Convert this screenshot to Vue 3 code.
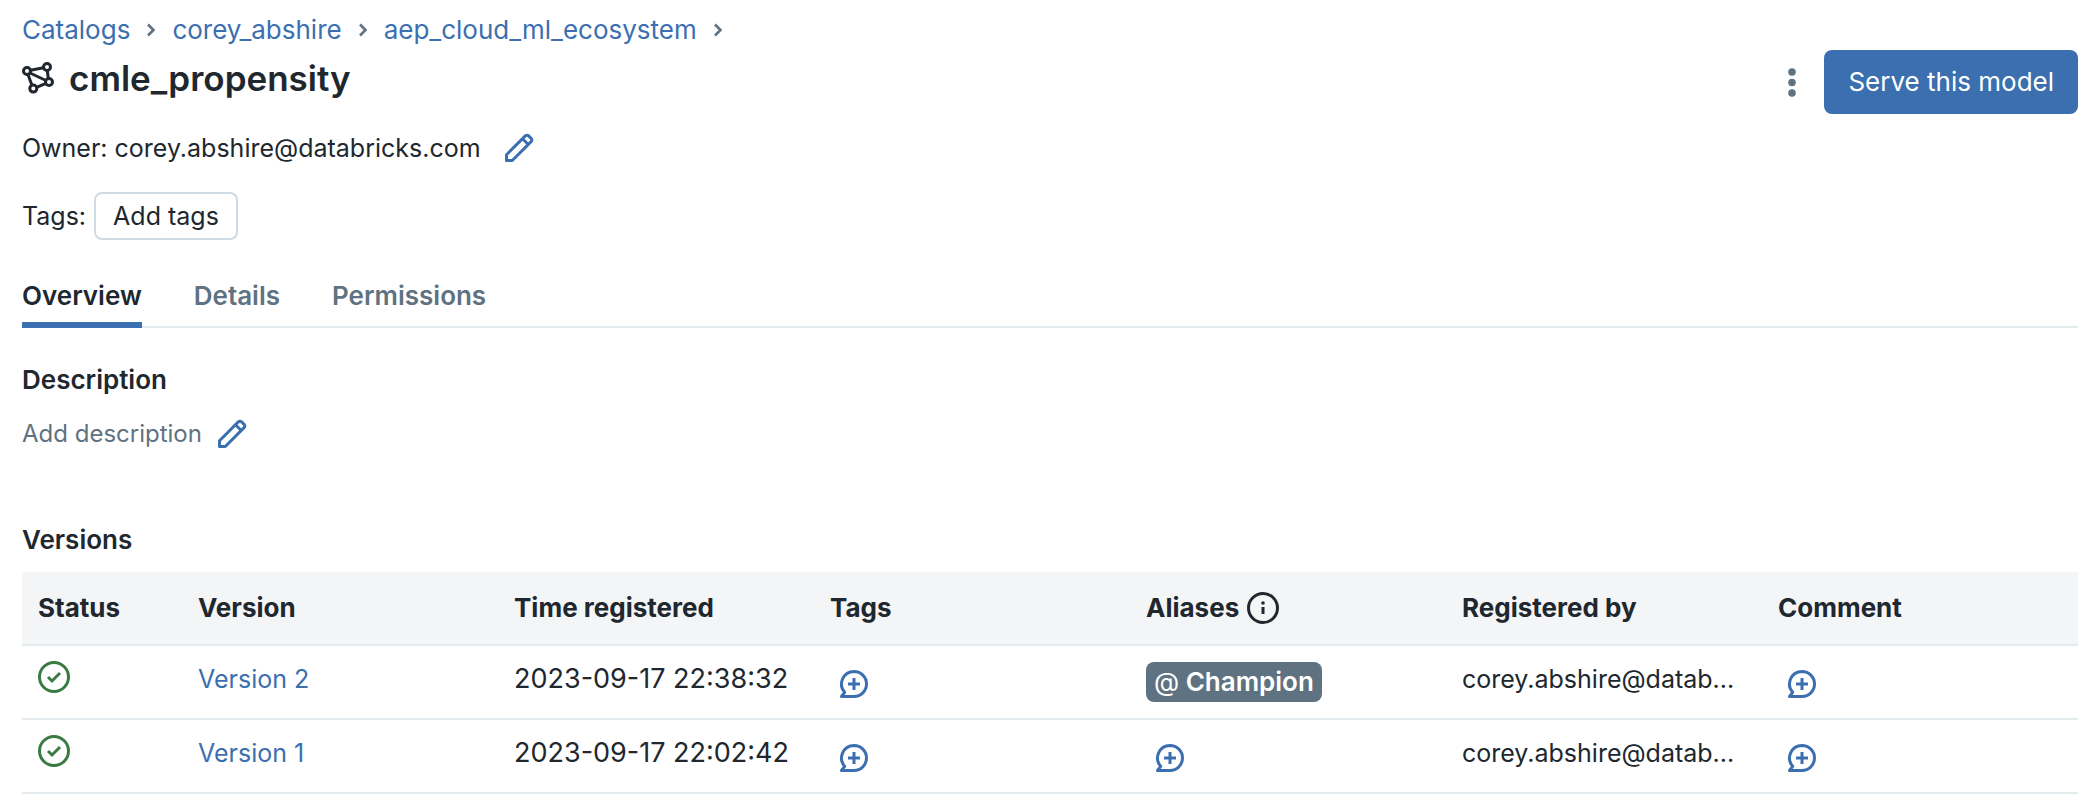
<script setup>
import { h } from 'vue'

const crumbs = ['Catalogs', 'corey_abshire', 'aep_cloud_ml_ecosystem']
const tabs = ['Overview', 'Details', 'Permissions']
const versions = [
  { name: 'Version 2', time: '2023-09-17 22:38:32', alias: 'Champion', owner: 'corey.abshire@datab...' },
  { name: 'Version 1', time: '2023-09-17 22:02:42', alias: '', owner: 'corey.abshire@datab...' }
]

const svg = (children) => h('svg', { class: 'icon', viewBox: '0 0 32 32', width: 32, height: 32, fill: 'none', stroke: 'currentColor', 'stroke-width': 3, 'aria-hidden': 'true' }, children)
const PencilIcon = () => svg([
  h('path', { 'stroke-linejoin': 'round', d: 'M3.500 22.700L22.300 3.900a2.300 2.300 0 0 1 3.300 0l2.500 2.500a2.300 2.300 0 0 1 0 3.300L9.300 28.500H3.500zM19.500 6.700l5.800 5.800' })
])
const CommentPlusIcon = () => svg([
  h('path', { 'stroke-linejoin': 'round', d: 'M16 3.500a12.500 12.500 0 0 1 0 25H3.500l3.200-4.200A12.500 12.500 0 0 1 16 3.500z' }),
  h('path', { d: 'M16 10v12M10 16h12' })
])
const CheckIcon = () => svg([
  h('circle', { cx: 16, cy: 16, r: 14.5 }),
  h('path', { d: 'M10 16l4 4 8-8' })
])
</script>

<template>
  <main class="page">
    <nav class="crumbs" aria-label="Breadcrumb">
      <template v-for="c in crumbs" :key="c">
        <a href="#">{{ c }}</a>
        <svg class="chevron" viewBox="0 0 10 14" width="10" height="14" aria-hidden="true"><path d="M2 1.500L7.500 7 2 12.500" fill="none" stroke="currentColor" stroke-width="2.600" /></svg>
      </template>
    </nav>

    <header class="head">
      <h1>
        <svg viewBox="0 0 32 32" width="32" height="32" fill="none" stroke="currentColor" stroke-width="3" aria-hidden="true">
          <circle cx="5" cy="9" r="3.500" /><circle cx="25" cy="5" r="3.500" /><circle cx="27" cy="20" r="3.500" /><circle cx="11.300" cy="26.600" r="3.500" />
          <path d="M8.500 8.300l13-2.600M6 12.500l4 11M8 11l16 7.500M25.300 8.500l1 8M14.500 25.300l9.500-4" />
        </svg>
        <span>cmle_propensity</span>
      </h1>
      <div class="actions">
        <button class="more" type="button" aria-label="More actions">
          <svg viewBox="0 0 8 29" width="8" height="29" fill="currentColor" aria-hidden="true"><circle cx="4" cy="4" r="3.800" /><circle cx="4" cy="14.500" r="3.800" /><circle cx="4" cy="25" r="3.800" /></svg>
        </button>
        <button class="primary" type="button">Serve this model</button>
      </div>
    </header>

    <div class="meta">
      <span>Owner: corey.abshire@databricks.com</span>
      <button class="icon-btn" type="button" aria-label="Edit owner"><PencilIcon /></button>
    </div>
    <div class="meta tags">
      <span>Tags:</span>
      <button class="outline" type="button">Add tags</button>
    </div>

    <div class="tabs" role="tablist">
      <button v-for="(t, i) in tabs" :key="t" type="button" role="tab" :aria-selected="i === 0" :class="{ active: i === 0 }">{{ t }}</button>
    </div>

    <section class="description">
      <h2>Description</h2>
      <div class="hint">
        <span>Add description</span>
        <button class="icon-btn" type="button" aria-label="Edit description"><PencilIcon /></button>
      </div>
    </section>

    <section>
      <h2>Versions</h2>
      <table>
        <colgroup><col class="narrow" /><col v-for="n in 6" :key="n" /></colgroup>
        <thead>
          <tr>
            <th>Status</th>
            <th>Version</th>
            <th>Time registered</th>
            <th>Tags</th>
            <th>
              <span class="with-icon">Aliases
                <svg viewBox="0 0 32 32" width="32" height="32" aria-hidden="true"><circle cx="16" cy="16" r="14.500" fill="none" stroke="currentColor" stroke-width="3" /><path d="M14.500 15h3v7h-3z" fill="currentColor" /><circle cx="16" cy="11" r="1.800" fill="currentColor" /></svg>
              </span>
            </th>
            <th>Registered by</th>
            <th>Comment</th>
          </tr>
        </thead>
        <tbody>
          <tr v-for="v in versions" :key="v.name">
            <td class="status"><CheckIcon /></td>
            <td class="text"><a href="#">{{ v.name }}</a></td>
            <td class="text time">{{ v.time }}</td>
            <td><button class="add" type="button" aria-label="Add tags"><CommentPlusIcon /></button></td>
            <td>
              <span v-if="v.alias" class="alias"><span class="at">@</span> {{ v.alias }}</span>
              <button v-else class="add" type="button" aria-label="Add alias"><CommentPlusIcon /></button>
            </td>
            <td class="text">{{ v.owner }}</td>
            <td><button class="add" type="button" aria-label="Add comment"><CommentPlusIcon /></button></td>
          </tr>
        </tbody>
      </table>
    </section>
  </main>
</template>

<style>
body {
  background: #fff;
}
</style>

<style scoped>
.page {
  padding: 10px 18px 12px 22px;
  font-family: Inter, Roboto, "Liberation Sans", sans-serif;
  font-size: 26px;
  line-height: 40px;
  color: #20272e;
}
button {
  font: inherit;
  color: inherit;
  background: none;
  border: 0;
  padding: 0;
}
svg {
  display: block;
  flex: none;
}
a {
  color: #3b6fb0;
  text-decoration: none;
}
h1,
h2 {
  margin: 0;
  font-weight: 600;
}
h1 {
  display: flex;
  align-items: center;
  gap: 15px;
  font-size: 35px;
  line-height: 56px;
}
h2 {
  font-size: 26px;
  line-height: 40px;
}
.crumbs {
  display: flex;
  align-items: center;
  gap: 16px;
}
.chevron {
  color: #5f7281;
}
.head {
  display: flex;
  align-items: flex-start;
  justify-content: space-between;
}
.actions {
  display: flex;
  align-items: center;
  height: 64px;
  gap: 28px;
}
.more {
  color: #5f7281;
}
.primary {
  padding: 12px 24px;
  border-radius: 8px;
  background: #3b6fb0;
  color: #fff;
}
.meta {
  display: flex;
  align-items: center;
  gap: 22px;
  margin-top: 14px;
  font-size: 25px;
}
.tags {
  gap: 8px;
  margin-top: 24px;
}
.outline {
  padding: 2px 17px;
  border: 2px solid #d0dae5;
  border-radius: 8px;
}
.icon-btn,
.add {
  color: #3b6fb0;
}
.tabs {
  display: flex;
  gap: 52px;
  margin-top: 36px;
  box-shadow: inset 0 -2px #e4ebee;
  font-weight: 600;
  color: #5f7281;
}
.tabs button {
  padding: 0 0 6px;
  border-bottom: 6px solid transparent;
  font-weight: 600;
}
.tabs .active {
  border-color: #3b6fb0;
  color: #20272e;
}
.description {
  margin: 32px 0 66px;
}
.hint {
  display: flex;
  align-items: center;
  gap: 14px;
  margin-top: 14px;
  font-size: 24px;
  color: #5f7281;
}
table {
  width: 100%;
  margin-top: 12px;
  border-collapse: separate;
  border-spacing: 0;
  table-layout: fixed;
}
.narrow {
  width: 160px;
}
th,
td {
  box-sizing: border-box;
  height: 74px;
  padding: 0 16px;
  border-bottom: 2px solid #e4ebee;
  text-align: left;
  white-space: nowrap;
}
th {
  background: #f3f5f7;
  font-weight: 700;
}
.with-icon {
  display: flex;
  align-items: center;
  gap: 8px;
}
.status {
  padding-top: 15px;
  vertical-align: top;
  color: #3a7a43;
}
.text {
  padding-top: 13px;
  vertical-align: top;
  font-size: 25px;
}
.time {
  font-size: 27px;
}
.add {
  display: block;
  padding: 4px 8px 0;
}
.alias {
  display: inline-block;
  padding: 0 8px;
  border-radius: 8px;
  background: #5f7281;
  color: #fff;
  font-weight: 600;
}
.at {
  font-weight: 400;
}
</style>
